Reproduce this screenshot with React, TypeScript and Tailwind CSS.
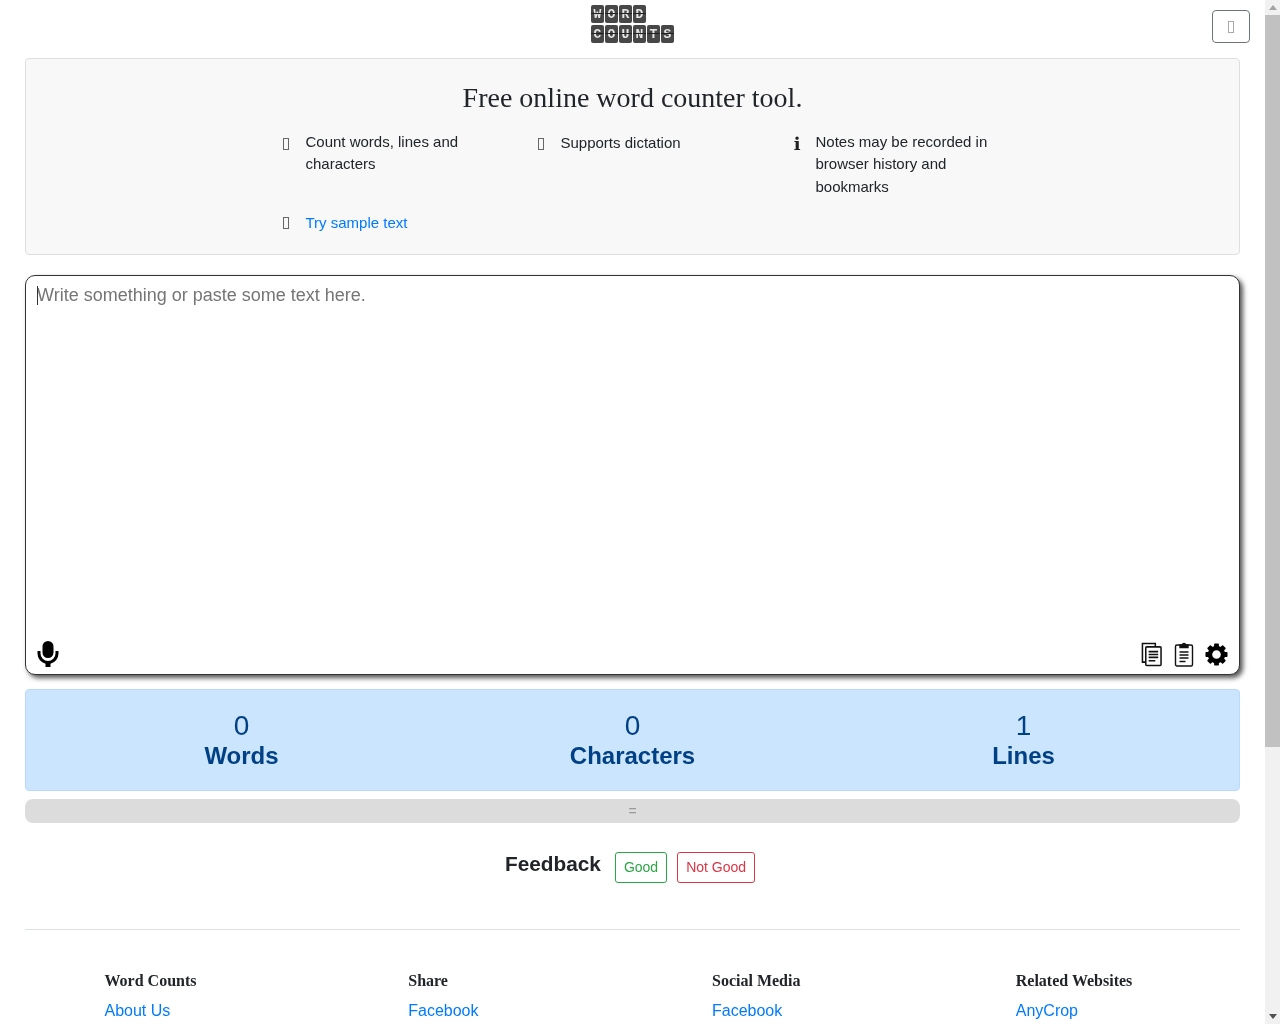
function LogoTile({ letter }: { letter: string }) {
  return (
    <span className="relative flex h-[18px] w-[13px] items-center justify-center rounded-[2px] bg-[#474747] font-['Liberation_Mono',monospace] text-[13px] font-bold leading-none text-[#e6e6e6]">
      {letter}
      <span className="absolute left-0 right-0 top-[8px] h-px bg-[#222]" />
    </span>
  );
}

function Logo() {
  return (
    <div className="flex flex-col gap-[2px] pt-[5px]">
      <div className="flex gap-px">
        {'WORD'.split('').map((c, i) => (
          <LogoTile key={i} letter={c} />
        ))}
      </div>
      <div className="flex gap-px">
        {'COUNTS'.split('').map((c, i) => (
          <LogoTile key={i} letter={c} />
        ))}
      </div>
    </div>
  );
}

// the icon font of the page is missing, so its icons show as empty boxes
function MissingGlyph({ className }: { className?: string }) {
  return <span className={`-ml-px block h-[12px] w-[6px] border border-[#666] ${className ?? ''}`} />;
}

function Feature({ icon, children }: { icon: React.ReactNode; children: React.ReactNode }) {
  return (
    <div className="flex w-[255px] pr-[15px]">
      <span className="w-[22px] shrink-0">{icon}</span>
      <div className="w-[190px]">{children}</div>
    </div>
  );
}

function MicIcon() {
  return (
    <svg width="22" height="26" viewBox="0 0 22 26" className="text-black" fill="currentColor">
      <rect x="5.500" y="0" width="11" height="17" rx="5.500" />
      <path d="M0.500 10h3v2.500a7.500 7.500 0 0 0 15 0V10h3v2.500a10.500 10.500 0 0 1-8 10.200V26h-5v-3.300a10.500 10.500 0 0 1-8-10.200z" />
    </svg>
  );
}

function CopyIcon() {
  return (
    <svg width="21" height="25" viewBox="0 0 22 26" fill="none" stroke="#111" strokeWidth="1.6" className="mr-px">
      <path d="M5 21H1.500V1.500H15V5" />
      <rect x="5" y="5" width="16" height="19.500" rx="1" fill="#fff" />
      <path d="M8 10h10M8 13h10M8 16h10M8 19.500h7" />
    </svg>
  );
}

function ClipboardIcon() {
  return (
    <svg width="20" height="26" viewBox="0 0 20 26" fill="none" stroke="#111" strokeWidth="1.4">
      <rect x="1.500" y="4" width="17" height="21" rx="1.500" />
      <path d="M6 6.500V4h2.500a1.500 1.500 0 0 1 3 0H14v2.500z" fill="#111" />
      <path d="M5.500 11h9M5.500 14h9M5.500 17h9M5.500 20.500h6" />
    </svg>
  );
}

function GearIcon() {
  return (
    <svg width="23" height="23" viewBox="0 0 24 24" fill="#000">
      <circle cx="12" cy="12" r="6.800" fill="none" stroke="#000" strokeWidth="4.600" />
      {[0, 45, 90, 135, 180, 225, 270, 315].map((deg) => (
        <rect key={deg} x="9.500" y="0.500" width="5" height="5" rx="0.800" transform={`rotate(${deg} 12 12)`} />
      ))}
    </svg>
  );
}

function Stat({ value, label }: { value: string; label: string }) {
  return (
    <div className="flex flex-1 flex-col items-center pb-px text-[#004085]">
      <span className="text-[28px] leading-[32px]">{value}</span>
      <span className="text-[24px] font-bold leading-[27px]">{label}</span>
    </div>
  );
}

function FooterColumn({ title, link }: { title: string; link: string }) {
  return (
    <div className="flex-1 pl-[79.500px]">
      <h5 className="mb-[9px] font-['Liberation_Serif',serif] text-[16px] font-bold leading-[19px] text-[#212529]">{title}</h5>
      <p className="leading-[24px] text-[#007bff]">{link}</p>
    </div>
  );
}

function Scrollbar() {
  return (
    <div className="flex h-[1024px] w-[15px] shrink-0 flex-col items-center bg-[#f1f1f1]">
      <div className="flex h-[15px] items-center justify-center">
        <span className="border-x-[4px] border-b-[5px] border-x-transparent border-b-[#a3a3a3]" />
      </div>
      <div className="h-[732px] w-full bg-[#c1c1c1]" />
      <div className="flex-1" />
      <div className="flex h-[15px] items-center justify-center">
        <span className="border-x-[4px] border-t-[5px] border-x-transparent border-t-[#505050]" />
      </div>
    </div>
  );
}

export default function App() {
  return (
    <div className="flex h-[1024px] overflow-hidden font-['Liberation_Sans',sans-serif] text-[16px] text-[#212529]">
      <div className="h-[1024px] w-[1265px] shrink-0 overflow-hidden will-change-transform">
        <header className="relative flex h-[58px] justify-center">
          <Logo />
          <button
            type="button"
            className="absolute left-[1212px] top-[10px] flex h-[33px] w-[38px] items-center justify-center rounded border border-[#6c757d]"
          >
            <span className="block h-[12px] w-[6px] border border-[#aaa]" />
          </button>
        </header>

        <main className="mx-[25px] flex flex-col">
          <section className="h-[197px] rounded border border-[#dfdfdf] bg-[#f8f8f8] pt-[22px]">
            <h1 className="text-center font-['Liberation_Serif',serif] text-[28px] leading-[34px] text-[#212529]">
              Free online word counter tool.
            </h1>
            <div className="ml-[257.500px] mt-[15.500px] flex text-[15px] leading-[22.500px]">
              <Feature icon={<MissingGlyph className="mt-[7px]" />}>Count words, lines and characters</Feature>
              <Feature icon={<MissingGlyph className="mt-[7px]" />}>
                <p className="mt-px">Supports dictation</p>
              </Feature>
              <Feature icon={<span className="font-['DejaVu_Sans',sans-serif] text-[18px] font-bold leading-[26px] text-[#222]">ℹ</span>}>
                Notes may be recorded in browser history and bookmarks
              </Feature>
            </div>
            <div className="ml-[257.500px] mt-[13.500px] flex text-[15px] leading-[22.500px]">
              <Feature icon={<MissingGlyph className="mt-[5px]" />}>
                <span className="text-[#007bff]">Try sample text</span>
              </Feature>
            </div>
          </section>

          <section className="mt-5 flex h-[400px] flex-col rounded-[10px] border border-[#333] bg-white pb-[7px] pl-[11px] pr-[11px] pt-[8px] shadow-[3px_3px_5px_#555]">
            <div className="relative min-h-0 flex-1">
              <textarea
                className="h-full w-full resize-none bg-transparent text-[18px] leading-[22px] outline-none placeholder:text-[#757575]"
                placeholder="Write something or paste some text here."
              />
              <span className="absolute left-0 top-[2px] h-[19px] w-px bg-[#333]" />
            </div>
            <div className="flex items-center justify-between">
              <MicIcon />
              <div className="flex items-center gap-[11px]">
                <CopyIcon />
                <ClipboardIcon />
                <GearIcon />
              </div>
            </div>
          </section>

          <section className="mt-[14px] flex h-[102px] items-center rounded border border-[#b8daff] bg-[#cce5ff] px-5">
            <Stat value="0" label="Words" />
            <Stat value="0" label="Characters" />
            <Stat value="1" label="Lines" />
          </section>

          <div className="mt-2 flex h-6 items-center justify-center rounded-lg bg-[#dcdcdc] text-[14px] text-[#999]">=</div>

          <section className="mt-[29px] flex items-start justify-center pr-[5px]">
            <h2 className="mr-[14px] text-[20.800px] font-bold leading-[23px] text-[#212529]">Feedback</h2>
            <span className="mr-[10px] flex h-[31px] items-center rounded-[3px] border border-[#28a745] px-2 text-[14px] text-[#28a745]">Good</span>
            <span className="flex h-[31px] items-center rounded-[3px] border border-[#dc3545] px-2 text-[14px] text-[#dc3545]">Not Good</span>
          </section>

          <hr className="mt-[46px] border-[#dee2e6]" />

          <footer className="mt-[41px] flex">
            <FooterColumn title="Word Counts" link="About Us" />
            <FooterColumn title="Share" link="Facebook" />
            <FooterColumn title="Social Media" link="Facebook" />
            <FooterColumn title="Related Websites" link="AnyCrop" />
          </footer>
        </main>
      </div>
      <Scrollbar />
    </div>
  );
}
